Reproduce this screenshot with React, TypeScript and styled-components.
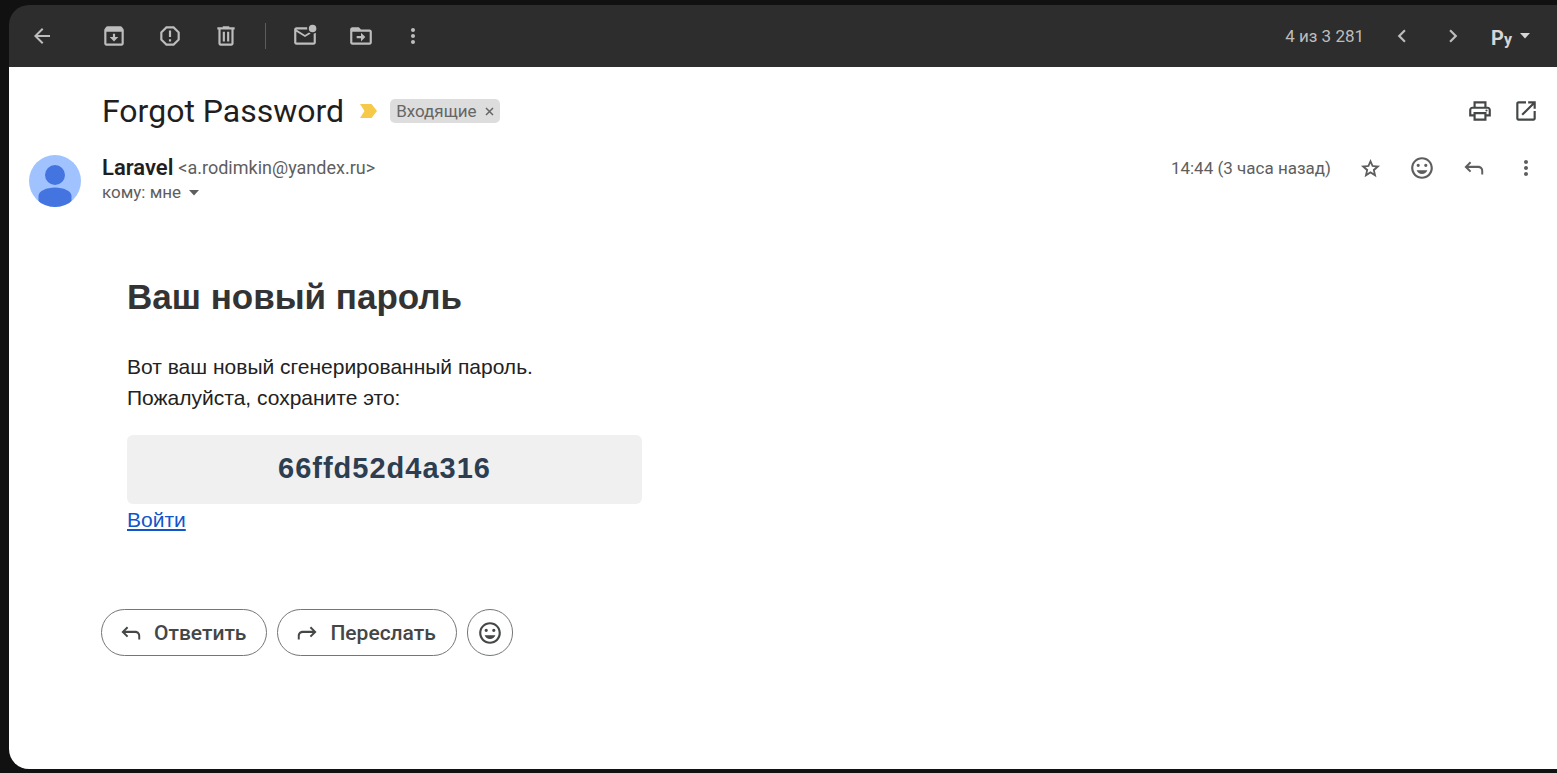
import React from "react";
import styled, { createGlobalStyle } from "styled-components";

const GlobalStyle = createGlobalStyle`
  * { box-sizing: border-box; }
  body {
    margin: 0;
    background: #111111;
    font-family: Roboto, "Liberation Sans", sans-serif;
    color: #1f1f1f;
  }
  button { font-family: inherit; }
`;

const Page = styled.div`
  min-height: 100vh;
  padding: 5px 0 4px 9px;
  display: flex;
`;

const Panel = styled.main`
  flex: 1;
  display: flex;
  flex-direction: column;
`;

const Toolbar = styled.header`
  display: flex;
  align-items: center;
  justify-content: space-between;
  height: 62px;
  padding: 0 27px 0 20px;
  border-radius: 20px 0 0 0;
  background: #2d2d2d;
  color: #bdbdbd;
`;

const Group = styled.div<{ $gap: number }>`
  display: flex;
  align-items: center;
  gap: ${(p) => p.$gap}px;
`;

const IconButton = styled.button`
  display: flex;
  align-items: center;
  justify-content: center;
  width: 26px;
  height: 26px;
  padding: 0;
  border: 0;
  background: none;
  color: inherit;
  cursor: pointer;
`;

const BackButton = styled(IconButton)`
  margin-right: 16px;
`;

const Divider = styled.span`
  width: 1px;
  height: 26px;
  margin: 0 -4px;
  background: #5c5c5c;
`;

const Counter = styled.span`
  font-size: 17px;
  line-height: 24px;
`;

const LanguageButton = styled.button`
  display: flex;
  align-items: center;
  gap: 8px;
  padding: 0;
  border: 0;
  background: none;
  color: #d6d6d6;
  font-size: 20px;
  line-height: 24px;
  font-weight: 700;
  cursor: pointer;

  span {
    padding-top: 5px;
  }

  small {
    font-size: 16px;
  }
`;

const Content = styled.div`
  flex: 1;
  padding: 24px 18px 40px 20px;
  border-radius: 0 0 0 20px;
  background: #ffffff;
`;

const SubjectRow = styled.div`
  display: flex;
  align-items: center;
  justify-content: space-between;
  height: 40px;
  padding-left: 73px;
  color: #444746;
`;

const Subject = styled.h1`
  margin: 0 3px 0 0;
  color: #1f1f1f;
  font-size: 32px;
  line-height: 40px;
  font-weight: 400;
`;

const Label = styled.span`
  display: flex;
  align-items: center;
  gap: 8px;
  height: 24px;
  padding: 0 6px;
  border-radius: 5px;
  background: #dddddd;
  color: #666666;
  font-size: 17px;
`;

const RemoveLabel = styled.button`
  display: flex;
  padding: 0;
  border: 0;
  background: none;
  color: inherit;
  cursor: pointer;
`;

const SenderRow = styled.div`
  display: flex;
  align-items: flex-start;
  gap: 21px;
  margin-top: 24px;
  color: #5e5e5e;
  font-size: 17px;
  line-height: 25px;
`;

const SenderText = styled.div`
  flex: 1;
`;

const SenderLine = styled.div`
  display: flex;
  align-items: center;
  gap: 5px;
  font-size: 18px;
`;

const SenderName = styled.strong`
  color: #1f1f1f;
  font-size: 22px;
  font-weight: 600;
`;

const RecipientButton = styled.button`
  display: flex;
  align-items: center;
  gap: 8px;
  padding: 0;
  border: 0;
  background: none;
  color: inherit;
  font-size: 17px;
  line-height: 25px;
  cursor: pointer;
`;

const Message = styled.article`
  max-width: 613px;
  margin-top: 61px;
  padding-left: 98px;
  color: #222222;
  font-family: "Liberation Sans", Arial, sans-serif;
  font-size: 21px;
  line-height: 31px;
`;

const MessageTitle = styled.h2`
  margin: 0 0 25px;
  color: #333333;
  font-size: 35px;
  line-height: 58px;
`;

const Paragraph = styled.p`
  max-width: 440px;
  margin: 0 0 22px;
`;

const Password = styled.div`
  padding: 11px 12px 13px;
  border-radius: 6px;
  background: #f0f0f0;
  color: #2c3e50;
  font-size: 29px;
  line-height: 45px;
  font-weight: 700;
  letter-spacing: 1px;
  text-align: center;
`;

const LoginLink = styled.a`
  color: #1155cc;
`;

const Actions = styled.div`
  display: flex;
  gap: 10px;
  margin-top: 74px;
  padding-left: 72px;
`;

const PillButton = styled.button<{ $round?: boolean }>`
  display: flex;
  align-items: center;
  justify-content: center;
  gap: 10px;
  height: 47px;
  min-width: 46px;
  padding: ${(p) => (p.$round ? "0" : "0 20px 0 16px")};
  border: 1px solid #747775;
  border-radius: 24px;
  background: #ffffff;
  color: #444746;
  font-size: 21px;
  font-weight: 500;
  cursor: pointer;
`;

const Svg = ({ d, size = 26 }: { d: string; size?: number }) => (
  <svg width={size} height={size} viewBox="0 0 24 24" fill="currentColor" fillRule="evenodd" aria-hidden="true">
    <path d={d} />
  </svg>
);

const icons = {
  back: "M20 11H7.83l5.59-5.59L12 4l-8 8 8 8 1.41-1.41L7.83 13H20z",
  archive:
    "M20.54 5.23l-1.39-1.68C18.88 3.21 18.47 3 18 3H6c-.47 0-.88.21-1.16.55L3.46 5.23C3.17 5.57 3 6.02 3 6.5V19c0 1.1.9 2 2 2h14c1.1 0 2-.9 2-2V6.5c0-.48-.17-.93-.46-1.27zM19 19H5V8h14v11zM11 10h2v3h3l-4 4-4-4h3z",
  report:
    "M15.73 3H8.27L3 8.27v7.46L8.27 21h7.46L21 15.73V8.27L15.73 3zM19 14.9L14.9 19H9.1L5 14.9V9.1L9.1 5h5.8L19 9.1v5.8zM11 7h2v6h-2zM11 15h2v2h-2z",
  trash: "M15 4V3H9v1H4v2h1v13c0 1.1.9 2 2 2h10c1.1 0 2-.9 2-2V6h1V4h-5zm2 15H7V6h10v13zM9 8h2v9H9zM13 8h2v9h-2z",
  unread:
    "M22 8.98V18c0 1.1-.9 2-2 2H4c-1.1 0-2-.9-2-2V6c0-1.1.9-2 2-2h10.1c-.06.32-.1.66-.1 1s.04.68.1 1H4l8 5 3.67-2.29c.47.43 1.02.76 1.63.98L12 13 4 8v10h16V9.9c.74-.15 1.42-.48 2-.92zM22.5 5a3.500 3.500 0 1 1-7 0 3.500 3.500 0 0 1 7 0z",
  move: "M20 6h-8l-2-2H4c-1.100 0-2 .9-2 2v12c0 1.100.9 2 2 2h16c1.100 0 2-.9 2-2V8c0-1.100-.9-2-2-2zm0 12H4V8h16v10zM12 12H8v2h4v3l4-4-4-4z",
  more: "M12 8c1.100 0 2-.9 2-2s-.9-2-2-2-2 .9-2 2 .9 2 2 2zm0 2c-1.100 0-2 .9-2 2s.9 2 2 2 2-.9 2-2-.9-2-2-2zm0 6c-1.100 0-2 .9-2 2s.9 2 2 2 2-.9 2-2-.9-2-2-2z",
  prev: "M15.410 7.410L14 6l-6 6 6 6 1.410-1.410L10.830 12z",
  next: "M10 6L8.590 7.410 13.170 12l-4.580 4.590L10 18l6-6z",
  print:
    "M19 8h-1V3H6v5H5c-1.660 0-3 1.340-3 3v6h4v4h12v-4h4v-6c0-1.660-1.340-3-3-3zM8 5h8v3H8V5zm8 14H8v-4h8v4zm4-4h-2v-2H6v2H4v-4c0-.55.45-1 1-1h14c.55 0 1 .45 1 1v4zM17 11.500a1 1 0 1 0 2 0 1 1 0 1 0-2 0z",
  open: "M19 19H5V5h7V3H5c-1.100 0-2 .9-2 2v14c0 1.100.9 2 2 2h14c1.100 0 2-.9 2-2v-7h-2v7zM14 3v2h3.590l-9.830 9.830 1.410 1.410L19 6.410V10h2V3h-7z",
  star: "M22 9.240l-7.190-.62L12 2 9.190 8.630 2 9.240l5.460 4.730L5.820 21 12 17.270 18.180 21l-1.630-7.030L22 9.240zM12 14.900l-3.300 2 .9-3.800-2.900-2.500 3.800-.3L12 6.800l1.500 3.500 3.800.3-2.900 2.500.9 3.800L12 14.900z",
  smile:
    "M12 2C6.470 2 2 6.470 2 12s4.470 10 10 10 10-4.480 10-10S17.520 2 12 2zm0 18c-4.420 0-8-3.580-8-8s3.580-8 8-8 8 3.580 8 8-3.580 8-8 8zM7 9.500a1.500 1.500 0 1 0 3 0 1.500 1.500 0 1 0-3 0zM14 9.500a1.500 1.500 0 1 0 3 0 1.500 1.500 0 1 0-3 0zM7 14h10c-.8 2-2.700 3.500-5 3.500S7.800 16 7 14z",
  reply:
    "M18.700 18v-3.200c0-1.700-1.100-2.800-2.800-2.800H6.800l2.700 2.700L8.200 16l-5-5 5-5 1.300 1.300L6.800 10h9.100c2.700 0 4.600 2 4.600 4.700V18z",
  forward:
    "M5.300 18v-3.200c0-1.700 1.100-2.800 2.800-2.800h9.100l-2.700 2.700 1.300 1.300 5-5-5-5-1.300 1.300 2.700 2.700H8.100c-2.700 0-4.600 2-4.600 4.700V18z",
};

const Caret = () => (
  <svg width="10" height="6" viewBox="0 0 10 6" fill="currentColor" aria-hidden="true">
    <path d="M0 0h10L5 5.500z" />
  </svg>
);

const Avatar = () => (
  <svg width="52" height="52" viewBox="0 0 52 52" role="img" aria-label="Laravel">
    <defs>
      <clipPath id="avatar">
        <circle cx="26" cy="26" r="26" />
      </clipPath>
    </defs>
    <g clipPath="url(#avatar)">
      <path fill="#a0c3ff" d="M0 0h52v52H0z" />
      <circle cx="26" cy="20" r="10" fill="#4374e0" />
      <path fill="#4374e0" d="M9.500 52V41c0-5 8-8.500 16.500-8.500S42.500 36 42.500 41v11z" />
    </g>
  </svg>
);

const Tool = ({ label, icon, size }: { label: string; icon: string; size?: number }) => (
  <IconButton type="button" aria-label={label}>
    <Svg d={icon} size={size} />
  </IconButton>
);

export default function App() {
  return (
    <Page>
      <GlobalStyle />
      <Panel>
        <Toolbar>
          <Group $gap={30}>
            <BackButton type="button" aria-label="Назад">
              <Svg d={icons.back} size={24} />
            </BackButton>
            <Tool label="Архивировать" icon={icons.archive} />
            <Tool label="В спам" icon={icons.report} />
            <Tool label="Удалить" icon={icons.trash} />
            <Divider />
            <Tool label="Отметить как непрочитанное" icon={icons.unread} />
            <Group $gap={26}>
              <Tool label="Переместить" icon={icons.move} />
              <Tool label="Ещё" icon={icons.more} size={24} />
            </Group>
          </Group>
          <Group $gap={25}>
            <Counter>4 из 3 281</Counter>
            <Tool label="Предыдущее" icon={icons.prev} />
            <Tool label="Следующее" icon={icons.next} />
            <LanguageButton type="button" aria-label="Способ ввода">
              <span>
                Р<small>у</small>
              </span>
              <Caret />
            </LanguageButton>
          </Group>
        </Toolbar>
        <Content>
          <SubjectRow>
            <Group $gap={13}>
              <Subject>Forgot Password</Subject>
              <svg width="17" height="14" viewBox="0 0 17 14" role="img" aria-label="Важное">
                <path fill="#f7c948" d="M0 0h11.500L17 7l-5.500 7H0l4.500-7z" />
              </svg>
              <Label>
                Входящие
                <RemoveLabel type="button" aria-label="Удалить ярлык">
                  <svg width="9" height="9" viewBox="0 0 9 9" stroke="currentColor" strokeWidth="1.500">
                    <path d="M1 1l7 7M8 1l-7 7" />
                  </svg>
                </RemoveLabel>
              </Label>
            </Group>
            <Group $gap={20}>
              <Tool label="Печать" icon={icons.print} />
              <Tool label="В новом окне" icon={icons.open} />
            </Group>
          </SubjectRow>
          <SenderRow>
            <Avatar />
            <SenderText>
              <SenderLine>
                <SenderName>Laravel</SenderName>
                <span>&lt;a.rodimkin@yandex.ru&gt;</span>
              </SenderLine>
              <RecipientButton type="button">
                кому: мне
                <Caret />
              </RecipientButton>
            </SenderText>
            <Group $gap={26}>
              <time>14:44 (3 часа назад)</time>
              <Tool label="Пометить" icon={icons.star} size={23} />
              <Tool label="Добавить реакцию" icon={icons.smile} />
              <Tool label="Ответить" icon={icons.reply} />
              <Tool label="Ещё" icon={icons.more} size={24} />
            </Group>
          </SenderRow>
          <Message>
            <MessageTitle>Ваш новый пароль</MessageTitle>
            <Paragraph>Вот ваш новый сгенерированный пароль. Пожалуйста, сохраните это:</Paragraph>
            <Password>66ffd52d4a316</Password>
            <LoginLink href="#login">Войти</LoginLink>
          </Message>
          <Actions>
            <PillButton type="button">
              <Svg d={icons.reply} />
              Ответить
            </PillButton>
            <PillButton type="button">
              <Svg d={icons.forward} />
              Переслать
            </PillButton>
            <PillButton type="button" $round aria-label="Добавить реакцию">
              <Svg d={icons.smile} />
            </PillButton>
          </Actions>
        </Content>
      </Panel>
    </Page>
  );
}
